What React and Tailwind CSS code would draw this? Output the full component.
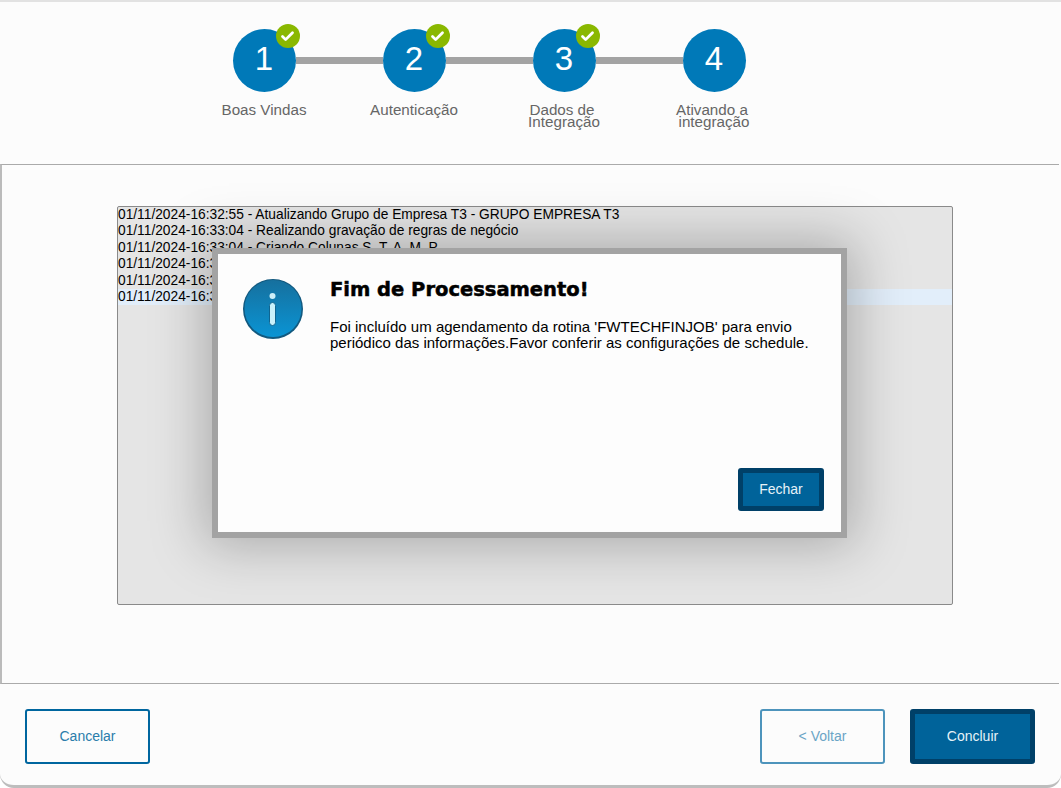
import { Check } from 'lucide-react';

const steps = [
  { n: 1, label: ['Boas Vindas'], done: true },
  { n: 2, label: ['Autenticação'], done: true },
  { n: 3, label: ['Dados de', 'Integração'], done: true },
  { n: 4, label: ['Ativando a', 'integração'], done: false },
];

const logRows = [
  '01/11/2024-16:32:55 - Atualizando Grupo de Empresa T3 - GRUPO EMPRESA T3',
  '01/11/2024-16:33:04 - Realizando gravação de regras de negócio',
  '01/11/2024-16:33:04 - Criando Colunas S. T. A. M. P.',
  '01/11/2024-16:33',
  '01/11/2024-16:33',
  '01/11/2024-16:33',
];

function StepCircle({ step }) {
  return (
    <div className="relative flex h-[63px] w-[63px] shrink-0 items-center justify-center rounded-full bg-[#0079b8] pb-[5px] text-[33px] leading-none text-white">
      {step.n}
      {step.done && (
        <span className="absolute left-[43px] top-[-5px] flex h-[24px] w-[24px] items-center justify-center rounded-full bg-[#8ab800]">
          <Check size={15} strokeWidth={4.5} color="#ffffff" />
        </span>
      )}
    </div>
  );
}

function InfoIcon() {
  return (
    <svg width="60" height="60" viewBox="0 0 60 60" className="shrink-0">
      <defs>
        <linearGradient id="infoFill" x1="0" y1="0" x2="0" y2="1">
          <stop offset="0" stopColor="#16709e" />
          <stop offset="1" stopColor="#0a94d4" />
        </linearGradient>
      </defs>
      <circle cx="30" cy="30" r="30" fill="#12597f" />
      <circle cx="30" cy="29.5" r="28.5" fill="url(#infoFill)" />
      <circle cx="29.5" cy="17" r="3" fill="#cdeef8" />
      <rect x="26.5" y="23.5" width="6" height="23" rx="3" fill="#c9f1fb" stroke="#0f6591" strokeWidth="1" />
    </svg>
  );
}

export default function App() {
  return (
    <div className="relative h-[788px] w-[1061px] overflow-hidden bg-white font-['Liberation_Sans',Arial,sans-serif]">
      <div className="flex h-[788px] w-[1061px] flex-col rounded-b-[14px] border-t-2 border-b-[3px] border-t-[#e2e2e2] border-b-[#bdbdbd] bg-[#fcfcfc]">
        {/* Stepper */}
        <div className="flex h-[162px] shrink-0 flex-col items-center pr-[83px] pt-[27px]">
          <div className="flex items-center">
            {steps.map((step, i) => (
              <div key={step.n} className="flex items-center">
                <StepCircle step={step} />
                {i < 3 && <div className="h-[7px] w-[87px] bg-[#a3a3a3]" />}
              </div>
            ))}
          </div>
          <div className="mt-[12px] grid grid-cols-[150px_150px_150px_150px]">
            {steps.map((step) => (
              <div key={step.n} className="text-center text-[15.2px] leading-[12px] text-[#666666]">
                {step.label.map((line, i) => (
                  <div key={line} className={i === 0 && step.label.length > 1 ? 'pr-[4px]' : ''}>
                    {line}
                  </div>
                ))}
              </div>
            ))}
          </div>
        </div>

        {/* Log */}
        <div className="flex h-[520px] w-[1059px] shrink-0 border-y border-l-2 border-y-[#aaaaaa] border-l-[#bbbbbb] pl-[115px] pt-[41px]">
          <div className="h-[399px] w-[836px] rounded-[2px] border border-[#8a8a8a] bg-[#e5e5e5] text-[13.75px] leading-[16.4px] text-black">
            {logRows.map((row, i) => (
              <div key={i} className={i === 5 ? 'bg-[#e2eefa]' : ''}>
                {row}
              </div>
            ))}
          </div>
        </div>

        {/* Footer */}
        <div className="flex flex-1 items-start justify-between pl-[25px] pr-[26px] pt-[25px] text-[14px]">
          <button className="h-[55px] w-[125px] rounded-[3px] border-2 border-[#00669f] text-[#2a7dab]">
            Cancelar
          </button>
          <div className="flex gap-[25px]">
            <button className="h-[55px] w-[125px] rounded-[3px] border-2 border-[#4d94bc] text-[#6ba5c6]">
              &lt; Voltar
            </button>
            <button className="h-[55px] w-[125px] rounded-[3px] border-[5px] border-[#004068] bg-[#00639a] text-[#e6f2f8]">
              Concluir
            </button>
          </div>
        </div>
      </div>

      {/* Modal */}
      <div className="absolute left-[212px] top-[248px] flex h-[290px] w-[635px] border-[6px] border-[#a3a3a3] bg-[#fdfdfd] shadow-[0_0_50px_8px_rgba(0,0,0,0.25)]">
        <div className="pl-[25px] pt-[25px]">
          <InfoIcon />
        </div>
        <div className="flex flex-1 flex-col pl-[27px] pr-[17px] pt-[24px]">
          <h1 className="font-['DejaVu_Sans',sans-serif] text-[19.5px] font-bold leading-[24px] text-black [-webkit-text-stroke:0.5px_black]">
            Fim de Processamento!
          </h1>
          <p className="mt-[17px] text-[15px] leading-[16.4px] text-black">
            Foi incluído um agendamento da rotina 'FWTECHFINJOB' para envio
            <br />
            periódico das informações.Favor conferir as configurações de schedule.
          </p>
          <div className="mt-auto flex justify-end pb-[21px]">
            <button className="h-[43px] w-[86px] rounded-[3px] border-[5px] border-[#004068] bg-[#00639a] text-[14px] text-[#e6f2f8]">
              Fechar
            </button>
          </div>
        </div>
      </div>
    </div>
  );
}
